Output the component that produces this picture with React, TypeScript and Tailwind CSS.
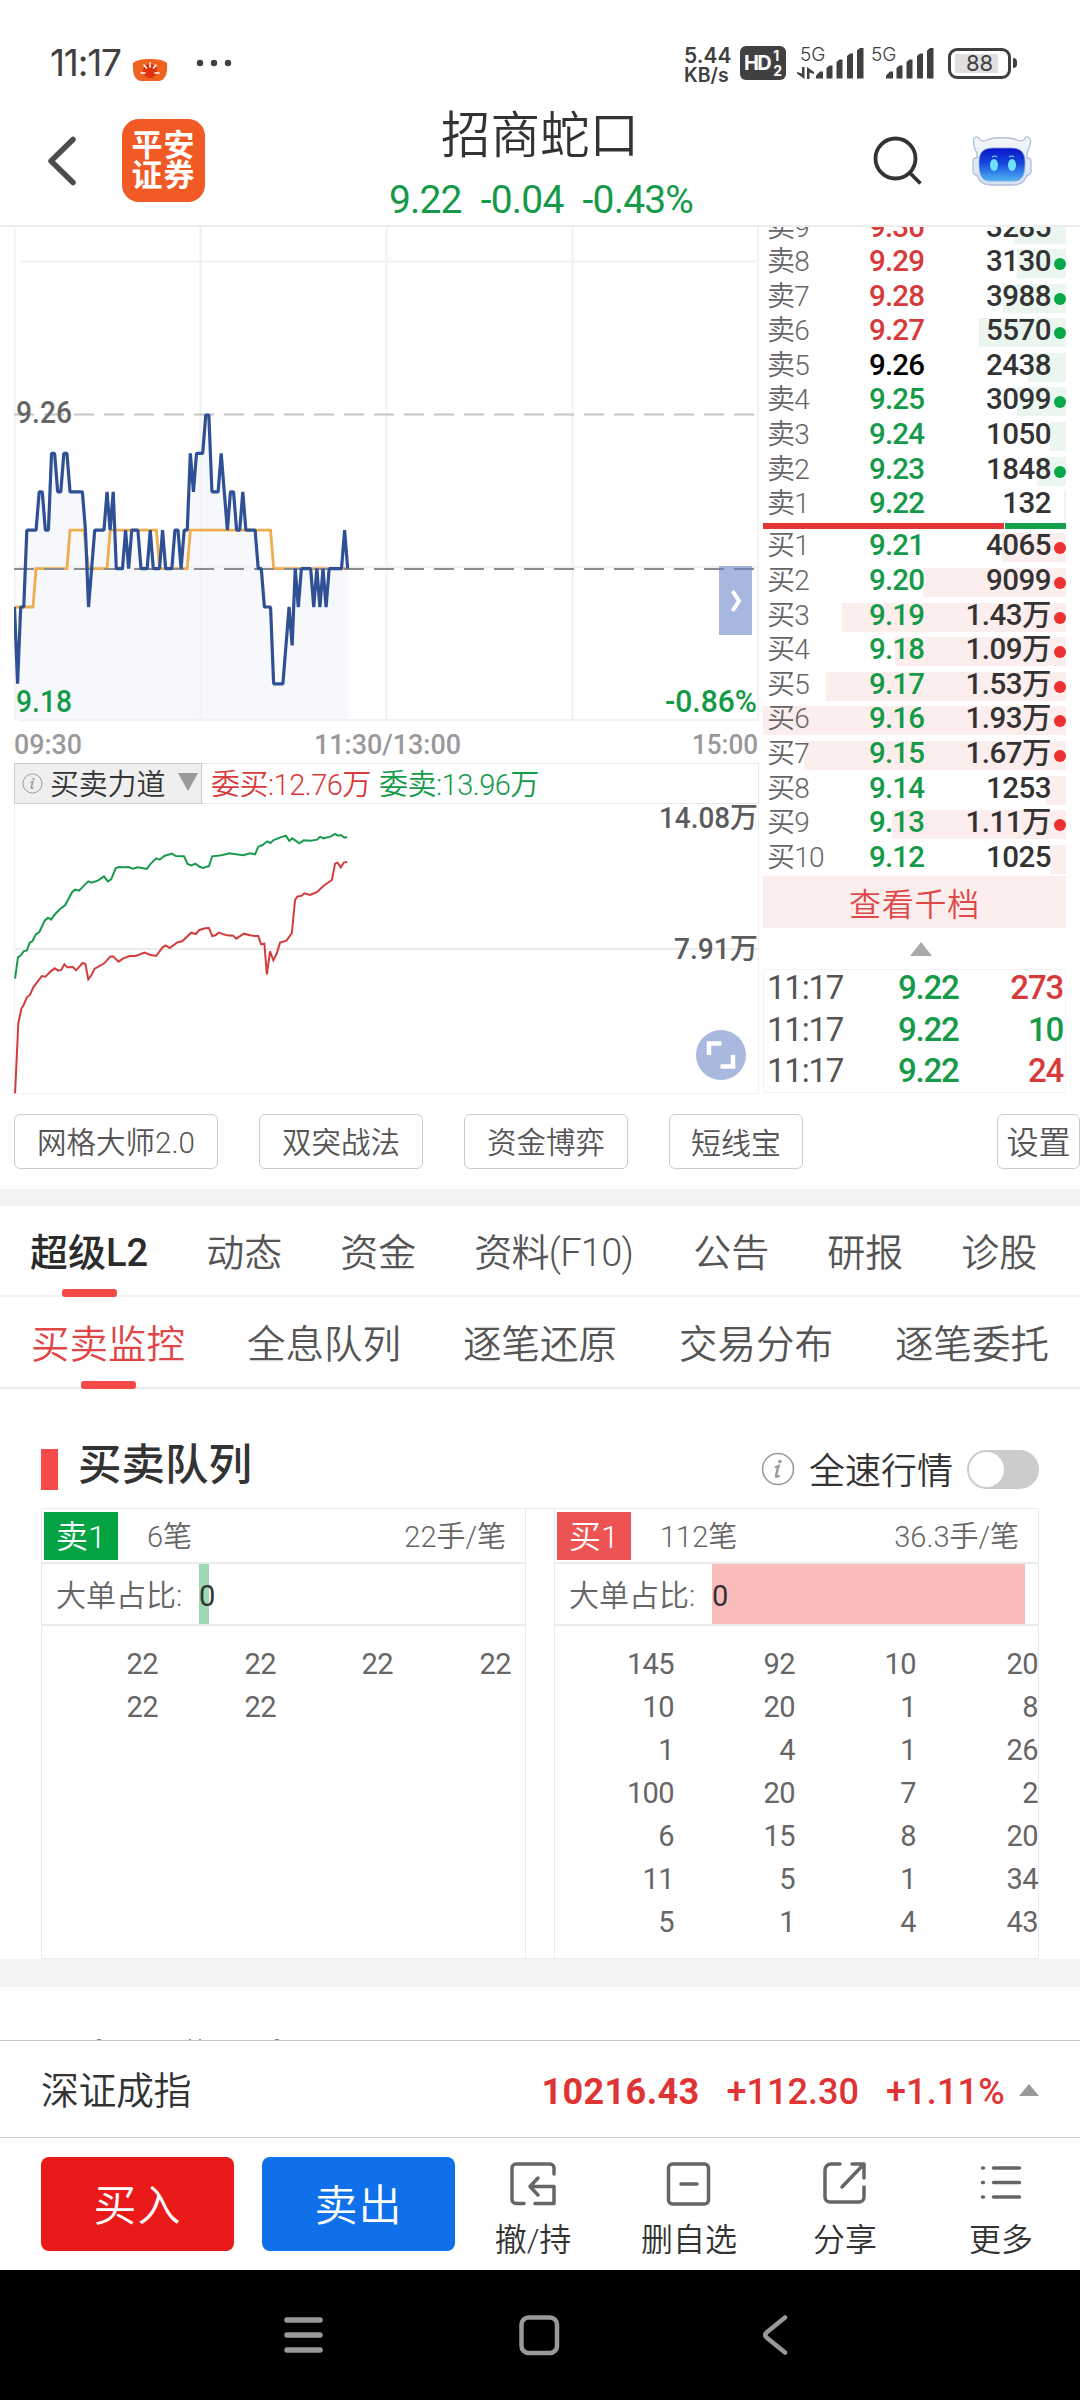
import React from 'react';
import clsx from 'clsx';

type Level = { label: string; price: string; volume: string; amount: number; dot?: boolean; tone: string };

const RED = 'text-[#d73a3a]';
const GREEN = 'text-[#149a48]';

const sells: Level[] = [
  { label: '卖9', price: '9.30', volume: '3285', amount: 3285, tone: RED },
  { label: '卖8', price: '9.29', volume: '3130', amount: 3130, dot: true, tone: RED },
  { label: '卖7', price: '9.28', volume: '3988', amount: 3988, dot: true, tone: RED },
  { label: '卖6', price: '9.27', volume: '5570', amount: 5570, dot: true, tone: RED },
  { label: '卖5', price: '9.26', volume: '2438', amount: 2438, tone: 'text-black' },
  { label: '卖4', price: '9.25', volume: '3099', amount: 3099, dot: true, tone: GREEN },
  { label: '卖3', price: '9.24', volume: '1050', amount: 1050, tone: GREEN },
  { label: '卖2', price: '9.23', volume: '1848', amount: 1848, dot: true, tone: GREEN },
  { label: '卖1', price: '9.22', volume: '132', amount: 132, tone: GREEN },
];

const buys: Level[] = [
  { label: '买1', price: '9.21', volume: '4065', amount: 4065, dot: true, tone: GREEN },
  { label: '买2', price: '9.20', volume: '9099', amount: 9099, dot: true, tone: GREEN },
  { label: '买3', price: '9.19', volume: '1.43万', amount: 14300, dot: true, tone: GREEN },
  { label: '买4', price: '9.18', volume: '1.09万', amount: 10900, dot: true, tone: GREEN },
  { label: '买5', price: '9.17', volume: '1.53万', amount: 15300, dot: true, tone: GREEN },
  { label: '买6', price: '9.16', volume: '1.93万', amount: 19300, dot: true, tone: GREEN },
  { label: '买7', price: '9.15', volume: '1.67万', amount: 16700, dot: true, tone: GREEN },
  { label: '买8', price: '9.14', volume: '1253', amount: 1253, tone: GREEN },
  { label: '买9', price: '9.13', volume: '1.11万', amount: 11100, dot: true, tone: GREEN },
  { label: '买10', price: '9.12', volume: '1025', amount: 1025, tone: GREEN },
];

const MAX_AMOUNT = 19300;

const ticks = [
  { time: '11:17', price: '9.22', volume: '273', tone: RED },
  { time: '11:17', price: '9.22', volume: '10', tone: GREEN },
  { time: '11:17', price: '9.22', volume: '24', tone: RED },
];

// cents above 9.00, one entry per minute from 09:30
const minutes = [
  21, 19, 21, 21, 23, 23, 23, 23, 24, 24, 23, 23, 25, 25, 24, 24, 25, 25, 24, 24, 24, 24, 24, 23, 21, 22, 23, 23, 23, 23,
  24, 23, 24, 22, 22, 22, 23, 22, 23, 23, 23, 22, 22, 22, 23, 22, 22, 22, 23, 22, 22, 22, 23, 23, 22, 23, 23, 25, 24, 25,
  25, 25, 26, 26, 24, 24, 24, 25, 24, 23, 24, 24, 23, 23, 24, 23, 23, 23, 23, 22, 22, 21, 21, 21, 19, 19, 19, 19, 20, 21,
  20, 22, 21, 22, 22, 22, 22, 21, 22, 21, 22, 21, 22, 22, 22, 22, 22, 23, 22,
];

const average: [number, number][] = [
  [0, 21], [6, 21], [7, 22], [17, 22], [18, 23], [22.5, 23], [24, 22], [30, 22], [31, 23], [46, 23],
  [47, 22], [56, 22], [57, 23], [83, 23], [84, 22], [108, 22],
];

const px = (minute: number) => minute * 3.085 + 0.5;
const py = (cents: number) => (26 - cents) * 38.4 + 188;

const pricePoints = minutes.map((c, i) => `${px(i)},${py(c)}`).join(' ');
const averagePoints = average.map(([m, c]) => `${px(m)},${py(c)}`).join(' ');

const sellForce =
  '42,686 50,622 58,616 66,604 75,601 83,578 91,573 100,553 110,546 125,512 134,503 143,509 152,495 168,477 182,466 202,426 210,419 221,422 230,412 247,394 256,398 275,391 291,379 302,394 311,388 324,354 333,351 345,352 360,351 372,356 386,352 411,357 420,343 437,325 447,329 460,318 481,311 492,318 515,319 525,342 536,346 547,341 560,351 569,354 585,348 594,319 620,316 642,310 660,313 681,316 700,310 714,313 723,290 735,285 748,274 757,279 766,270 785,262 800,257 810,273 818,265 838,280 850,271 870,272 888,269 896,260 905,265 925,260 938,252 947,257 955,255 964,263 972,261';
const buyForce =
  '42,1030 51,820 60,775 66,765 75,742 84,734 93,712 103,698 117,678 127,680 142,664 153,655 163,662 171,660 180,643 188,652 204,651 213,661 231,639 239,642 247,688 256,675 265,656 292,640 308,620 316,619 332,635 345,625 363,618 380,618 404,608 420,614 437,618 455,592 464,586 475,594 496,577 510,574 535,548 548,552 558,540 574,535 585,534 594,558 603,556 612,548 635,556 653,557 661,566 683,551 700,556 714,558 723,558 731,583 740,581 747,673 756,604 765,631 774,612 784,578 802,572 817,549 826,450 832,440 845,437 852,430 868,435 888,426 905,408 929,390 938,341 945,338 954,352 963,337 972,336';

const SignalBars = () => (
  <svg viewBox="0 0 48 31" className="h-[31px] w-12" fill="#404040">
    <path d="M0 30.5v-3l4-4h3v7z" />
    <path d="M10.500 30.500V20l3-2.500h3v13z" />
    <path d="M20.500 30.500V14l3-2.500h3v19z" />
    <path d="M31 30.500V8l3-2.500h3v25z" />
    <path d="M41 30.500V2.500L44 0h3.500v30.500z" />
  </svg>
);

const StatusBar = () => (
  <div className="flex h-[104px] items-start pt-[42px] pl-[50px] font-['Inter',sans-serif] text-[#404040]">
    <span className="w-[80px] text-[37px] leading-[42px] tracking-[-1.2px]">11:17</span>
    <svg viewBox="0 0 36 24" className="mt-[16px] ml-[2px] h-6 w-9">
      <path d="M1 5C6-.5 30-.5 35 5c.5 10-1 17-8 18H9C2 22 .5 15 1 5z" fill="#f0621f" />
      <circle cx="18" cy="13" r="7" fill="#e0310f" />
      <path d="M18 5v4M12 7l2.500 3M24 7l-2.500 3M9 15h4M27 15h-4" stroke="#fff" strokeWidth="1.600" strokeLinecap="round" />
    </svg>
    <svg viewBox="0 0 36 8" className="mt-[17px] ml-[28px] h-2 w-9" fill="#404040">
      <circle cx="4" cy="4" r="3.200" />
      <circle cx="18" cy="4" r="3.200" />
      <circle cx="32" cy="4" r="3.200" />
    </svg>
    <div className="ml-[452px] w-[54px] pt-[4px] text-[21px] leading-[19.5px] font-semibold">
      <div>5.44</div>
      <div className="text-[19.5px]">KB/s</div>
    </div>
    <div className="ml-[2px] mt-[4px] flex h-[34px] w-[46px] items-center justify-center rounded-md bg-[#404040] font-bold text-white">
      <span className="text-[20px] tracking-[-1.500px]">HD</span>
      <span className="ml-[3px] flex flex-col text-[14px] leading-[15px]">
        <span>1</span>
        <span>2</span>
      </span>
    </div>
    <div className="relative ml-[11px] mt-[6px] w-[67px] pl-[19px]">
      <span className="absolute -top-[3px] left-[3px] text-[19px] leading-[20px] font-light">5G</span>
      <svg viewBox="0 0 17 12" className="absolute top-[19px] left-0 h-3 w-[17px]" fill="#404040">
        <path d="M5 0h2.500v12L0 6.500V5l5 1.500zM10 12h2.500V5.500L17 7V5L10 0z" />
      </svg>
      <SignalBars />
    </div>
    <div className="relative ml-[3px] mt-[6px] w-[67px] pl-[19px]">
      <span className="absolute -top-[3px] left-[4px] text-[19px] leading-[20px] font-light">5G</span>
      <SignalBars />
    </div>
    <div className="ml-[14px] mt-[6px] flex h-[31px] w-[63px] items-center justify-center rounded-[9px] border-[3px] border-[#404040]">
      <span className="flex h-[19px] w-[49px] items-center justify-center bg-[linear-gradient(90deg,#e0e0e0_88%,#fff_88%)] text-[22px]">
        88
      </span>
    </div>
    <div className="ml-[2px] mt-[16px] h-[10px] w-1 rounded-r-sm bg-[#404040]" />
  </div>
);

const Robot = () => (
  <svg viewBox="0 0 60 50" className="h-[50px] w-[60px]">
    <defs>
      <linearGradient id="face" x1="0" y1="0" x2="0" y2="1">
        <stop offset="0" stopColor="#0a12c8" />
        <stop offset=".45" stopColor="#1546dc" />
        <stop offset="1" stopColor="#4fb4f5" />
      </linearGradient>
      <linearGradient id="shell" x1="0" y1="0" x2="0" y2="1">
        <stop offset="0" stopColor="#f4f7fb" />
        <stop offset="1" stopColor="#d3e0f2" />
      </linearGradient>
    </defs>
    <path
      d="M1.500 5C1 1.500 4.500 0 6.500 1.500 8 5.500 12 5.500 15 4c7-3 23-3 30 0 3 1.500 7 1.500 8.500-2.500C55.500 0 59 1.500 58.500 6c-.5 6-2.500 9-3.500 11v5c3 0 4 1 4 3v10c0 3-1 4-4 4.500C52 47 48 49 40 49H20C12 49 8 47 5 39.500 2 39 1 38 1 35V25c0-2 1-3 4-3v-5C3 14 1.500 10 1.500 5z"
      fill="url(#shell)"
      stroke="#aebfd6"
      strokeWidth="1.300"
    />
    <path d="M7 26c0-10 5-14 14-14h18c9 0 14 4 14 14 0 14-3 19-12 19H19C10 45 7 40 7 26z" fill="url(#face)" stroke="#7f9fd8" strokeWidth=".8" />
    <ellipse cx="22" cy="29" rx="4" ry="6" fill="#6fe2ff" />
    <ellipse cx="40" cy="29" rx="4" ry="6" fill="#6fe2ff" />
    <path d="M20 21q3-2 5 0M37 21q3-2 5 0" stroke="#8fd0ff" strokeWidth="1.200" fill="none" />
  </svg>
);

const Header = () => (
  <header className="grid h-[123px] grid-cols-[390px_300px_390px] border-b-2 border-[#ededed]">
    <div className="flex items-start pl-[46px]">
      <svg viewBox="0 0 32 52" className="mt-[31px] h-[52px] w-8" fill="none" stroke="#4c4c4c" strokeWidth="5.500" strokeLinecap="round" strokeLinejoin="round">
        <path d="M27 4.500L5 26l22 21.500" />
      </svg>
      <div className="ml-[44px] mt-[15px] flex h-[83px] w-[83px] flex-col items-center justify-center rounded-[17px] bg-[#f15a24] text-[31px] leading-[30px] font-bold tracking-[1px] text-white">
        <span>平安</span>
        <span>证券</span>
      </div>
    </div>
    <div className="flex flex-col items-center whitespace-nowrap">
      <h1 className="mt-[2px] text-[49.500px] leading-[60px] font-[350] text-[#333]">招商蛇口</h1>
      <div className={clsx('mt-[14px] ml-[2px] flex gap-[19px] text-[39px] leading-[40px] tracking-[-.8px]', GREEN)}>
        <span>9.22</span>
        <span>-0.04</span>
        <span>-0.43%</span>
      </div>
    </div>
    <div className="flex items-start pl-[183px]">
      <svg viewBox="0 0 50 50" className="mt-[31px] h-[50px] w-[50px]" fill="none" stroke="#333" strokeWidth="3.800">
        <circle cx="22.500" cy="23.500" r="20" />
        <path d="M36.500 37.500l11 11" />
      </svg>
      <div className="ml-[49px] mt-[32px]">
        <Robot />
      </div>
    </div>
  </header>
);

const PriceChart = () => (
  <svg viewBox="0 0 745 536" className="block h-[536px] w-[745px]" fontFamily="Roboto, 'Noto Sans CJK SC', sans-serif">
    <polygon points={`0,493 ${pricePoints} ${px(108)},493`} fill="#f6f8fb" />
    <g stroke="#f1f1f2" strokeWidth="2">
      <path d="M6 34.500h739M0 340h745M6 493h739" />
      <path d="M186.500 0v494M372.500 0v494M558.500 0v494M744 0v494M.5 0v494" />
    </g>
    <path d="M0 187.500h740" stroke="#c4c4c4" strokeWidth="2" strokeDasharray="20 10" />
    <polyline points={averagePoints} fill="none" stroke="#f0ad4e" strokeWidth="2.800" />
    <path d="M0 342h740" stroke="#8c8c8c" strokeWidth="2" strokeDasharray="20 10" />
    <polyline points={pricePoints} fill="none" stroke="#2f5095" strokeWidth="3.200" strokeLinejoin="bevel" />
    <g fontSize="30.500" fontWeight="500">
      <text x="2" y="196" fill="#666" textLength="56" lengthAdjust="spacingAndGlyphs">9.26</text>
      <text x="2" y="484.500" fill="#149a48" textLength="56" lengthAdjust="spacingAndGlyphs">9.18</text>
      <text x="651" y="484.500" fill="#149a48" textLength="92" lengthAdjust="spacingAndGlyphs">-0.86%</text>
    </g>
    <g fontSize="28.500" fill="#999" fontWeight="500">
      <text x="0" y="527" textLength="68" lengthAdjust="spacingAndGlyphs">09:30</text>
      <text x="300" y="527" textLength="147" lengthAdjust="spacingAndGlyphs">11:30/13:00</text>
      <text x="678" y="527" textLength="66" lengthAdjust="spacingAndGlyphs">15:00</text>
    </g>
    <rect x="705" y="339" width="33" height="69" fill="#5f7cc4" fillOpacity=".55" />
    <path d="M718.500 364l6.500 10-6.500 10" fill="none" stroke="#fff" strokeWidth="4" />
  </svg>
);

const ForceChart = () => (
  <div className="relative h-[290px] w-[745px] border-r border-b border-[#f1f1f2]">
    <svg viewBox="0 0 745 290" className="block h-[290px] w-[745px]" fontFamily="Roboto, 'Noto Sans CJK SC', sans-serif">
      <path d="M0 145h745" stroke="#ebebeb" strokeWidth="2" />
      <path d="M.5 0v290" stroke="#f1f1f2" />
      <g transform="scale(.35714 .33333) translate(-39 -162)" fill="none" strokeWidth="2">
        <polyline points={sellForce} stroke="#1a9a4c" vectorEffect="non-scaling-stroke" />
        <polyline points={buyForce} stroke="#d33c3c" vectorEffect="non-scaling-stroke" />
      </g>
      <g fontSize="29" fontWeight="500" fill="#5c5c5c">
        <text x="645" y="24" textLength="99" lengthAdjust="spacingAndGlyphs">14.08万</text>
        <text x="660" y="155" textLength="84" lengthAdjust="spacingAndGlyphs">7.91万</text>
      </g>
    </svg>
    <div className="absolute right-[12px] bottom-[13px] size-[50px] rounded-full bg-[#a9b8de]">
      <svg viewBox="0 0 50 50" fill="none" stroke="#fff" strokeWidth="4.500">
        <path d="M13 25V13.500h12.500M37 25v11.500H24.500" />
      </svg>
    </div>
  </div>
);

const InfoIcon = ({ className }: { className: string }) => (
  <svg viewBox="0 0 34 34" className={className} fill="none" stroke="#999">
    <circle cx="17" cy="17" r="15.500" strokeWidth="1.600" />
    <circle cx="18.800" cy="9.500" r="1.800" fill="#999" stroke="none" />
    <path d="M14 15.500l3.500-1.500-2.500 9.500q-.3 2.500 3.500 0" strokeWidth="2.400" />
  </svg>
);

const LevelRow = ({ level, side }: { level: Level; side: 'sell' | 'buy' }) => (
  <div className="relative h-[34.6px] pt-[1px] pl-[4px]">
    <div
      className={clsx('absolute top-[3px] right-0 h-[29px]', side === 'sell' ? 'bg-[#eaf6ee]' : 'bg-[#fdeeee]')}
      style={{ width: `${(level.amount / MAX_AMOUNT) * 100}%` }}
    />
    <div className="relative flex h-[29px] items-center text-[29.5px] leading-[29px]">
      <span className="w-[102px] text-[28px] font-[350] tracking-[-.8px] text-[#666]">{level.label}</span>
      <span className={clsx('font-medium tracking-[-.8px]', level.tone)}>{level.price}</span>
      <span className="mr-[15px] flex-1 text-right font-medium tracking-[-.5px] text-[#333]">{level.volume}</span>
      {level.dot && (
        <i
          className={clsx('absolute top-[11px] right-0 size-3 rounded-full', side === 'sell' ? 'bg-[#07a848]' : 'bg-[#ee3030]')}
        />
      )}
    </div>
  </div>
);

const OrderBook = () => (
  <aside className="ml-1 w-[303px]">
    <div className="-mt-[15.5px]">
      {sells.map((l) => (
        <LevelRow key={l.label} level={l} side="sell" />
      ))}
    </div>
    <div className="mb-[1.5px] flex h-[6px] gap-px">
      <div className="w-[241px] bg-[#e43636]" />
      <div className="flex-1 bg-[#12a04a]" />
    </div>
    <div>
      {buys.map((l) => (
        <LevelRow key={l.label} level={l} side="buy" />
      ))}
    </div>
    <div className="flex h-[52px] items-center justify-center bg-[#fdeeee] pt-[5px] text-[32px] font-[350] tracking-[.8px] text-[#e04848]">
      查看千档
    </div>
    <svg viewBox="0 0 22 14" className="mt-[14px] ml-[147px] h-[14px] w-[22px]" fill="#aaa">
      <path d="M11 0l11 14H0z" />
    </svg>
    <div className="mt-[13px] h-[124px] border border-[#f3f3f3] pt-[1px] pl-[3px]">
      {ticks.map((t, i) => (
        <div key={i} className="flex h-[41.500px] items-start text-[33px] leading-[34px] tracking-[-1.200px]">
          <span className="w-[131px] text-[#555]">{t.time}</span>
          <span className={clsx('font-medium', GREEN)}>{t.price}</span>
          <span className={clsx('flex-1 pr-[2px] text-right font-medium', t.tone)}>{t.volume}</span>
        </div>
      ))}
    </div>
  </aside>
);

const Quote = () => (
  <section className="flex h-[867px] overflow-hidden pl-[14px]">
    <div className="w-[745px]">
      <PriceChart />
      <div className="flex h-[41px] items-center border-y border-r border-[#e6e6e6] whitespace-nowrap">
        <div className="-my-px flex h-[41px] w-[188px] items-center border border-[#ccc] bg-[#efefef] pl-[7px] text-[29px] text-[#333]">
          <InfoIcon className="size-[21px]" />
          <span className="mt-[5px] ml-[7px] font-[350] tracking-[-.2px]">买卖力道</span>
          <svg viewBox="0 0 20 18" className="ml-[13px] -mt-1 h-[18px] w-5" fill="#999">
            <path d="M0 0h20L10 18z" />
          </svg>
        </div>
        <span className={clsx('mt-[5px] ml-[9px] w-[168px] text-[29px] font-[350] tracking-[-.5px]', RED)}>委买:12.76万</span>
        <span className={clsx('mt-[5px] text-[29px] font-[350] tracking-[-.5px]', GREEN)}>委卖:13.96万</span>
      </div>
      <ForceChart />
    </div>
    <OrderBook />
  </section>
);

const Chip = ({ label, className }: { label: string; className: string }) => (
  <button
    className={clsx(
      'flex h-[55px] shrink-0 items-center justify-center rounded-md border border-[#ccc] pt-[3px] whitespace-nowrap font-[350] text-[#555]',
      className
    )}
  >
    {label}
  </button>
);

const Tools = () => (
  <div className="flex h-[95px] items-start pt-[20px] pl-[14px]">
    <Chip label="网格大师2.0" className="w-[204px] text-[29.5px]" />
    <Chip label="双突战法" className="ml-[41px] w-[164px] text-[29.5px]" />
    <Chip label="资金博弈" className="ml-[41px] w-[164px] text-[29.5px]" />
    <Chip label="短线宝" className="ml-[41px] w-[134px] text-[30px]" />
    <Chip label="设置" className="ml-auto w-[83px] text-[32px]" />
  </div>
);

const tabs = ['超级L2', '动态', '资金', '资料(F10)', '公告', '研报', '诊股'];
const subTabs = ['买卖监控', '全息队列', '逐笔还原', '交易分布', '逐笔委托'];

const Tabs = () => (
  <nav className="flex h-[91px] items-start gap-[58px] border-b-2 border-[#f2f2f2] pt-[18px] pl-[30px] text-[38px] leading-[58px] whitespace-nowrap">
    {tabs.map((t, i) => (
      <div key={t} className={clsx('flex flex-col items-center', i === 0 ? 'font-medium text-[#2b2b2b]' : 'font-[350] text-[#555]')}>
        <span className={clsx(t === '资料(F10)' && 'w-[161px] tracking-[-.7px]')}>{t}</span>
        {i === 0 && <i className="mt-[7px] h-[8px] w-[55px] rounded-[3px] bg-[#f54848]" />}
      </div>
    ))}
  </nav>
);

const SubTabs = () => (
  <nav className="flex h-[92px] items-start gap-[60px] border-b-2 border-[#ececec] pt-[19px] pl-[30px] text-[38.5px] leading-[58px] font-[350] whitespace-nowrap">
    {subTabs.map((t, i) => (
      <div key={t} className={clsx('flex w-[156px] flex-col items-center', i === 0 ? 'text-[#e24545]' : 'text-[#555]')}>
        <span>{t}</span>
        {i === 0 && <i className="mt-[7px] h-[8px] w-[55px] rounded-[3px] bg-[#f54848]" />}
      </div>
    ))}
  </nav>
);

type QueueProps = {
  tag: string;
  tagColor: string;
  count: string;
  avg: string;
  bar: string;
  cells: string;
  rows: number[][];
};

const Queue = ({ tag, tagColor, count, avg, bar, cells, rows }: QueueProps) => (
  <div className="w-[485px] border-x border-[#ebebeb] text-[#666]">
    <div className="flex h-[55px] items-center border-b-2 border-[#ebebeb] pl-[2px] text-[29px] font-[350]">
      <span className={clsx('flex h-12 w-[74px] items-center justify-center pt-[3px] text-[32px] text-white', tagColor)}>{tag}</span>
      <span className="mt-[5px] ml-[29px]">{count}</span>
      <span className="mt-[5px] mr-[19px] ml-auto">{avg}</span>
    </div>
    <div className="flex h-[62px] items-stretch border-b-2 border-[#ebebeb] text-[30px] leading-[64px] font-[350]">
      <span className="w-[157px] pl-[14px]">大单占比:</span>
      <span className={clsx('text-[29px] font-normal text-[#333]', bar)}>0</span>
    </div>
    <div className={clsx('grid pt-[17px] text-right text-[29px] leading-[43px] tracking-[-.6px]', cells)}>
      {rows.flat().map((n, i) => (
        <span key={i}>{n}</span>
      ))}
    </div>
  </div>
);

const QueueSection = () => (
  <section className="h-[570px] pt-[46px] pr-[41px] pl-[41px]">
    <div className="flex h-[73px] items-start">
      <i className="mt-[14px] h-[41px] w-[17px] bg-[#f74a4a]" />
      <h2 className="ml-[20px] text-[43.500px] leading-[62px] font-medium text-[#333]">买卖队列</h2>
      <InfoIcon className="mt-[17px] ml-auto size-[34px]" />
      <span className="ml-[14px] text-[36px] leading-[74px] font-[350] text-[#333]">全速行情</span>
      <div className="mt-[15px] ml-[14px] h-[39px] w-[72px] rounded-full bg-[#ccc] p-[2px]">
        <div className="size-[35px] rounded-full bg-white" />
      </div>
    </div>
    <div className="flex h-[451px] justify-between border-y border-[#ebebeb]">
      <Queue
        tag="卖1"
        tagColor="bg-[#04a344]"
        count="6笔"
        avg="22手/笔"
        bar="w-[10px] bg-[#9bdab4]"
        cells="grid-cols-[116px_118px_117px_118px]"
        rows={[[22, 22, 22, 22], [22, 22]]}
      />
      <Queue
        tag="买1"
        tagColor="bg-[#ee5354]"
        count="112笔"
        avg="36.3手/笔"
        bar="w-[313px] bg-[#fabbbb]"
        cells="grid-cols-[119px_121px_121px_122px]"
        rows={[
          [145, 92, 10, 20],
          [10, 20, 1, 8],
          [1, 4, 1, 26],
          [100, 20, 7, 2],
          [6, 15, 8, 20],
          [11, 5, 1, 34],
          [5, 1, 4, 43],
        ]}
      />
    </div>
  </section>
);

// top edge of the next section's heading, the rest sits under the index bar
const NextSection = () => (
  <svg viewBox="0 0 300 2" className="mt-[51px] h-[2px] w-[300px]" fill="#888">
    <path d="M97 1h4v1h-4zM189 1h2v1h-2zM199 1h2v1h-2zM275 1h4v1h-4z" />
  </svg>
);

const IndexBar = () => (
  <div className="flex h-[97px] items-center border-t border-[#c8c8c8] bg-white pt-[5px] pr-[41px] pl-[41px] text-[36px] text-[#e03434]">
    <span className="text-[38px] font-[350] tracking-[-.5px] text-[#333]">深证成指</span>
    <span className="ml-auto font-bold tracking-[.4px]">10216.43</span>
    <span className="ml-[27px] font-medium">+112.30</span>
    <span className="ml-[27px] font-medium tracking-[.2px]">+1.11%</span>
    <svg viewBox="0 0 20 12" className="-mt-1 ml-[14px] h-3 w-5" fill="#999">
      <path d="M10 0l10 12H0z" />
    </svg>
  </div>
);

const actions = [
  {
    label: '撤/持',
    icon: <path d="M15 42.500H7a4 4 0 01-4-4V7a4 4 0 014-4h34a4 4 0 014 4v6M26 42.500h19V25.500H21M29 17l-8 8.500 8 8.500" />,
  },
  {
    label: '删自选',
    icon: (
      <>
        <rect x="3.500" y="3" width="40" height="40" rx="4" />
        <path d="M16 23h16" />
      </>
    ),
  },
  {
    label: '分享',
    icon: <path d="M19 3h-9a6 6 0 00-6 6v27a5 5 0 005 5h29a5 5 0 005-5V26M31 3h12v14M43 3L21 26" />,
  },
  {
    label: '更多',
    icon: <path d="M5.500 7h1M16.500 7h26M5.500 21.500h1M16.500 21.500h26M5.500 36h1M16.500 36h26" />,
  },
];

const ActionBar = () => (
  <div className="flex h-[133px] items-start border-t border-[#c8c8c8] bg-white pl-[41px]">
    <button className="mt-[19px] h-[94px] w-[193px] rounded-lg bg-[#ea1a1b] pt-[4px] text-[43px] font-[350] tracking-[1px] text-white">
      买入
    </button>
    <button className="mt-[19px] ml-[28px] h-[94px] w-[193px] rounded-lg bg-[#0f70ea] pt-[4px] text-[43px] font-[350] tracking-[1px] text-white">
      卖出
    </button>
    {actions.map((a) => (
      <div key={a.label} className="flex w-[156px] flex-col items-center pt-[23px] text-[#333]">
        <svg
          viewBox="0 0 48 46"
          className="h-[46px] w-12"
          fill="none"
          stroke="#666"
          strokeWidth="3.500"
          strokeLinecap="round"
          strokeLinejoin="round"
        >
          {a.icon}
        </svg>
        <span className="mt-[11px] text-[32px] leading-[44px] font-[350]">{a.label}</span>
      </div>
    ))}
  </div>
);

const SystemNav = () => (
  <div className="flex h-[130px] items-start bg-black pt-[45px] pl-[283px]">
    <svg viewBox="0 0 40 40" className="size-10" stroke="#999" strokeWidth="5.500" strokeLinecap="round">
      <path d="M4 5h33M4 20h33M4 35h33" />
    </svg>
    <svg viewBox="0 0 42 42" className="ml-[195px] -mt-px size-[42px]" fill="none" stroke="#999" strokeWidth="4.500">
      <rect x="3.500" y="3.500" width="35.500" height="35.500" rx="7" />
    </svg>
    <svg viewBox="0 0 28 42" className="ml-[201px] -mt-px h-[42px] w-7" fill="none" stroke="#999" strokeWidth="4.500" strokeLinecap="round" strokeLinejoin="round">
      <path d="M24 3.500L5.500 18.500q-2.500 2.500 0 5L24 38.500" />
    </svg>
  </div>
);

export default function App() {
  return (
    <div className="flex h-[2400px] w-[1080px] flex-col overflow-hidden bg-white font-[Roboto,'Noto_Sans_CJK_SC',sans-serif]">
      <StatusBar />
      <Header />
      <main className="flex-1 overflow-hidden">
        <Quote />
        <Tools />
        <div className="h-[17px] bg-[#f2f3f5]" />
        <Tabs />
        <SubTabs />
        <QueueSection />
        <div className="h-[28px] bg-[#f2f3f5]" />
        <NextSection />
      </main>
      <IndexBar />
      <ActionBar />
      <SystemNav />
    </div>
  );
}
